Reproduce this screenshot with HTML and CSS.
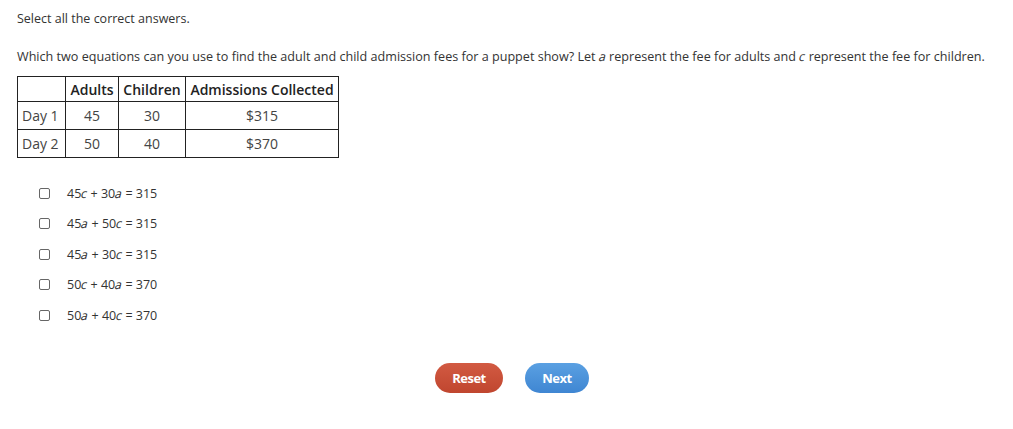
FILE: index.html
```html
<!DOCTYPE html>
<html>
<head>
<meta charset="utf-8">
<link rel="stylesheet" href="styles.css">
</head>
<body>
<div class="page">
  <p class="instr">Select all the correct answers.</p>
  <p class="question">Which two equations can you use to find the adult and child admission fees for a puppet show? Let <span class="v">a</span> represent the fee for adults and <span class="v">c</span> represent the fee for children.</p>
  <table class="data">
    <tr class="head"><th class="c0"></th><th class="c1">Adults</th><th class="c2">Children</th><th class="c3">Admissions Collected</th></tr>
    <tr><td class="rowh">Day 1</td><td>45</td><td>30</td><td>$315</td></tr>
    <tr><td class="rowh">Day 2</td><td>50</td><td>40</td><td>$370</td></tr>
  </table>
  <ul class="opts">
    <li><span class="box"></span><span class="eq">45<span class="v">c</span> + 30<span class="v">a</span> = 315</span></li>
    <li><span class="box"></span><span class="eq">45<span class="v">a</span> + 50<span class="v">c</span> = 315</span></li>
    <li><span class="box"></span><span class="eq">45<span class="v">a</span> + 30<span class="v">c</span> = 315</span></li>
    <li><span class="box"></span><span class="eq">50<span class="v">c</span> + 40<span class="v">a</span> = 370</span></li>
    <li><span class="box"></span><span class="eq">50<span class="v">a</span> + 40<span class="v">c</span> = 370</span></li>
  </ul>
  <div class="btns">
    <button class="btn reset">Reset</button>
    <button class="btn next">Next</button>
  </div>
</div>
</body>
</html>
```
FILE: styles.css
```css
html, body { margin: 0; padding: 0; background: #fff; }
body { font-family: "Open Sans", "DejaVu Sans", sans-serif; color: #333; }
.page { padding: 10px 17px 0 17px; }
.instr { margin: 0; font-size: 12.5px; line-height: 17px; }
.question { margin: 21px 0 0 0; font-size: 12.6px; line-height: 18px; white-space: nowrap; }
.v { display: inline-block; transform: skewX(-14deg); }
.data { border-collapse: collapse; margin-top: 10px; font-size: 14px; color: #444; }
.data th, .data td { border: 1px solid #222; padding: 0 4px; text-align: center; height: 27px; }
.data th { font-weight: 600; color: #222; height: 24px; }
.data .rowh { text-align: left; }
.c0 { width: 39px; }
.c1 { width: 44px; }
.c2 { width: 58px; }
.c3 { width: 144px; }
.opts { list-style: none; margin: 20px 0 0 0; padding: 0 0 0 22px; }
.opts li { display: flex; align-items: center; height: 30.5px; font-size: 12.5px; }
.box { width: 9px; height: 9px; border: 1px solid #666; border-radius: 2px; margin-right: 17px; }
.btns { display: flex; justify-content: center; gap: 22px; margin-top: 32px; padding-left: 11px; }
.btn { border: none; border-radius: 15px; height: 30px; color: #fff; font-family: "Open Sans", sans-serif; font-weight: 700; font-size: 13px; letter-spacing: -0.5px; padding: 0; }
.reset { width: 68px; background: linear-gradient(#d25a42, #c0462f); }
.next { width: 64px; background: linear-gradient(#5aa0e2, #3f86d2); }
```
